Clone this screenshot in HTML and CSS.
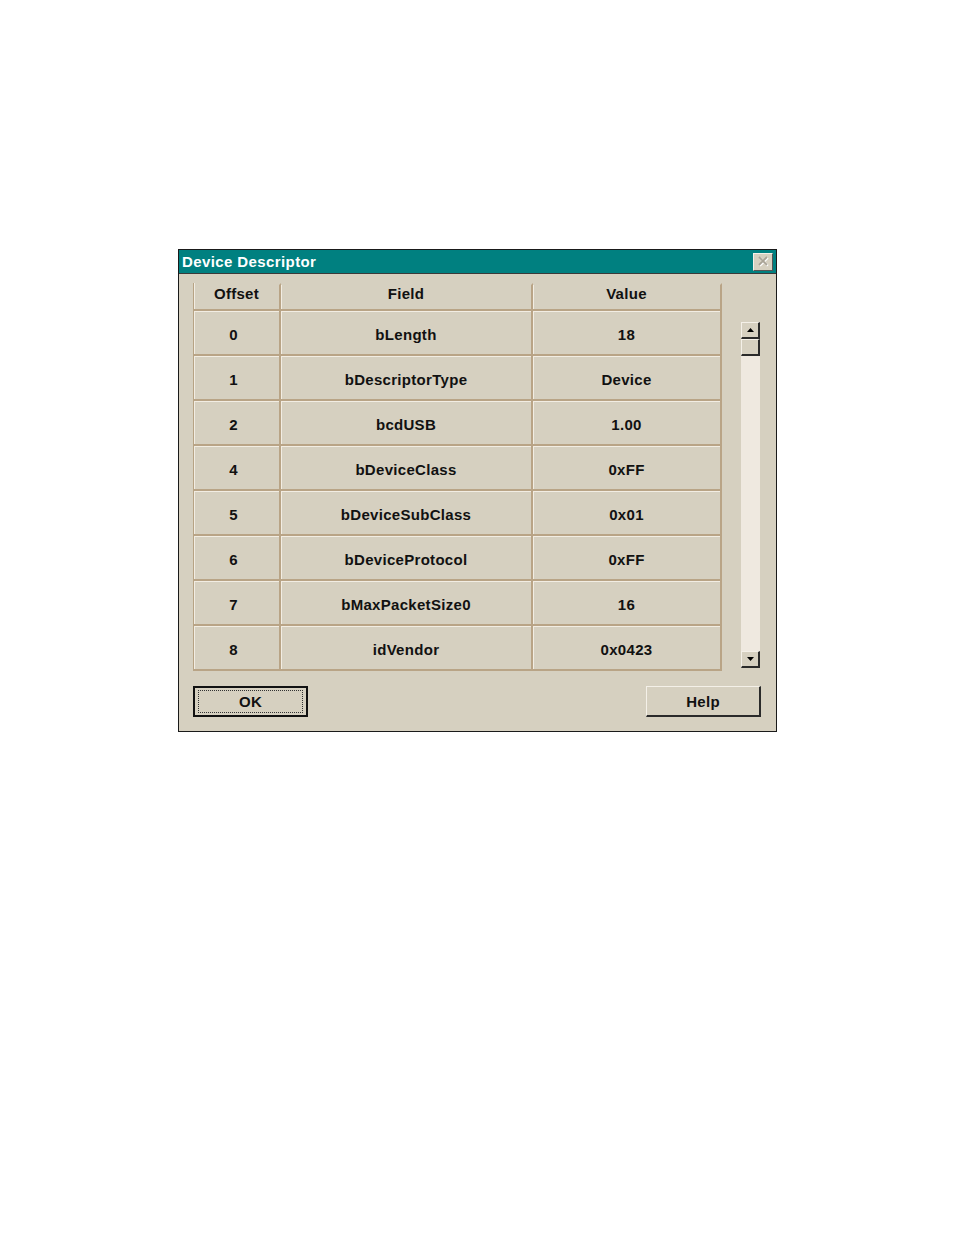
FILE: index.html
```html
<!DOCTYPE html>
<html>
<head>
<meta charset="utf-8">
<link rel="stylesheet" href="styles.css">
</head>
<body>
<div class="dialog">
  <div class="titlebar">
    <span class="title">Device Descriptor</span>
    <span class="close"><svg width="12" height="11" viewBox="0 0 12 11"><path d="M2 1 L10 9 M10 1 L2 9" stroke="#fff" stroke-width="2.2" fill="none" transform="translate(0.8,0.8)"/><path d="M2 1 L10 9 M10 1 L2 9" stroke="#a9a396" stroke-width="1.8" fill="none"/></svg></span>
  </div>
  <div class="content">
    <div class="tablearea">
      <div class="grid">
        <div class="hcell">Offset</div><div class="hcell">Field</div><div class="hcell">Value</div>
        <div class="cell num">0</div><div class="cell">bLength</div><div class="cell">18</div>
        <div class="cell num">1</div><div class="cell">bDescriptorType</div><div class="cell">Device</div>
        <div class="cell num">2</div><div class="cell">bcdUSB</div><div class="cell">1.00</div>
        <div class="cell num">4</div><div class="cell">bDeviceClass</div><div class="cell">0xFF</div>
        <div class="cell num">5</div><div class="cell">bDeviceSubClass</div><div class="cell">0x01</div>
        <div class="cell num">6</div><div class="cell">bDeviceProtocol</div><div class="cell">0xFF</div>
        <div class="cell num">7</div><div class="cell">bMaxPacketSize0</div><div class="cell">16</div>
        <div class="cell num">8</div><div class="cell">idVendor</div><div class="cell">0x0423</div>
      </div>
      <div class="scrollbar">
        <div class="sbtn"><svg width="7" height="4" viewBox="0 0 7 4"><path d="M3.5 0 L7 4 L0 4 Z" fill="#000"/></svg></div>
        <div class="thumb"></div>
        <div class="track"></div>
        <div class="sbtn"><svg width="7" height="4" viewBox="0 0 7 4"><path d="M0 0 L7 0 L3.5 4 Z" fill="#000"/></svg></div>
      </div>
    </div>
    <div class="buttons">
      <div class="btn default"><span class="focus">OK</span></div>
      <div class="btn">Help</div>
    </div>
  </div>
</div>
</body>
</html>
```

FILE: styles.css
```css
html, body {
  margin: 0;
  padding: 0;
  background: #ffffff;
}
body {
  padding-top: 249px;
  padding-left: 178px;
  font-family: "Liberation Sans", Arial, sans-serif;
  font-weight: bold;
  font-size: 15px;
  letter-spacing: 0.3px;
  color: #111;
}
.dialog {
  width: 599px;
  height: 483px;
  box-sizing: border-box;
  border: 1px solid #1a1a1a;
  background: #d6d0c0;
  display: flex;
  flex-direction: column;
}
.titlebar {
  height: 23px;
  background: #008080;
  display: flex;
  align-items: center;
  justify-content: space-between;
  padding: 0 3px 0 3px;
  border-bottom: 1px solid #3a3a3a;
}
.title {
  color: #fff;
  font-size: 15px;
  letter-spacing: 0.4px;
}
.close {
  width: 20px;
  height: 18px;
  box-sizing: border-box;
  background: #d6d0c0;
  border-top: 1px solid #f4f0e8;
  border-left: 1px solid #f4f0e8;
  border-right: 1px solid #555;
  border-bottom: 1px solid #555;
  display: flex;
  align-items: center;
  justify-content: center;
}
.content {
  flex: 1;
  padding: 9px 15px 14px 14px;
  display: flex;
  flex-direction: column;
}
.tablearea {
  display: flex;
  align-items: flex-start;
  gap: 19px;
}
.grid {
  display: grid;
  grid-template-columns: 87px 252px 189px;
  grid-template-rows: 28px repeat(8, 45px);
  border-left: 1px solid #b7a384;
  box-shadow: inset 1px 0 0 #f2ede3;
}
.hcell, .cell {
  display: flex;
  align-items: center;
  justify-content: center;
  box-sizing: border-box;
  border-right: 2px solid #b9a486;
  box-shadow: inset 1px 0 0 #f2ede3;
}
.hcell {
  border-bottom: 2px solid #b9a486;
  border-top: 2px solid transparent;
  align-items: flex-start;
  padding-top: 0;
}
.cell {
  border-bottom: 2px solid #b9a486;
  box-shadow: inset 1px 1px 0 #f2ede3;
  padding-top: 3px;
}
.cell.num {
  padding-right: 6px;
}
.scrollbar {
  margin-top: 39px;
  width: 19px;
  display: flex;
  flex-direction: column;
}
.sbtn, .thumb {
  width: 19px;
  height: 17px;
  box-sizing: border-box;
  background: #d6d0c0;
  border-top: 1px solid #f4f0e8;
  border-left: 1px solid #f4f0e8;
  border-right: 2px solid #2a2a2a;
  border-bottom: 2px solid #2a2a2a;
  display: flex;
  align-items: center;
  justify-content: center;
}
.track {
  height: 295px;
  background: #efe9e0;
}
.buttons {
  margin-top: auto;
  display: flex;
  justify-content: space-between;
  align-items: flex-end;
}
.btn {
  width: 115px;
  height: 31px;
  box-sizing: border-box;
  background: #d6d0c0;
  border-top: 1px solid #f4f0e8;
  border-left: 1px solid #f4f0e8;
  border-right: 2px solid #2a2a2a;
  border-bottom: 2px solid #2a2a2a;
  display: flex;
  align-items: center;
  justify-content: center;
}
.btn.default {
  border: 2px solid #111;
  padding: 2px 3px;
}
.focus {
  flex: 1;
  align-self: stretch;
  border: 1px dotted #333;
  display: flex;
  align-items: center;
  justify-content: center;
}
```
